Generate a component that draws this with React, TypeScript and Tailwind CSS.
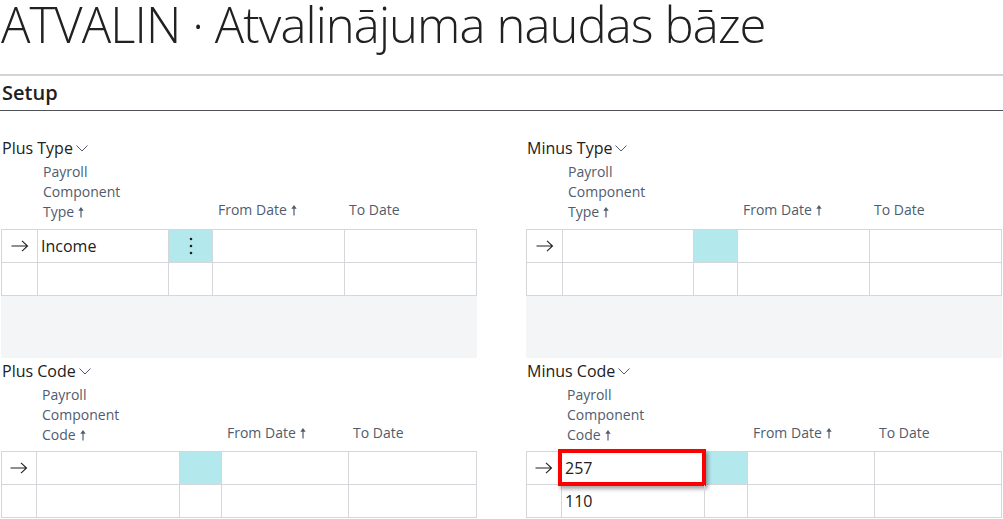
import React from "react";

const font = { fontFamily: '"Open Sans", "Noto Sans", sans-serif' };

function SortArrow() {
  return (
    <svg width="8" height="12" viewBox="0 0 8 12" className="inline-block ml-[3px] -mt-[3px]">
      <path d="M4 11.5V3" stroke="#505c6d" strokeWidth="1.2" />
      <path d="M1.3 4.8L4 1l2.7 3.8z" fill="#505c6d" />
    </svg>
  );
}

function Chevron() {
  return (
    <svg width="14" height="10" viewBox="0 0 14 10" className="inline-block ml-[2px]">
      <path d="M1.5 2.5l5.5 5.5 5.5-5.5" stroke="#505c6d" strokeWidth="1" fill="none" />
    </svg>
  );
}

function RowArrow() {
  return (
    <svg width="18" height="12" viewBox="0 0 18 12">
      <path d="M0.5 6H16.5M11 0.8L16.5 6L11 11.2" stroke="#212121" strokeWidth="1.1" fill="none" />
    </svg>
  );
}

function Dots() {
  return (
    <svg width="4" height="18" viewBox="0 0 4 18">
      <circle cx="2" cy="2" r="1.3" fill="#212121" />
      <circle cx="2" cy="9" r="1.3" fill="#212121" />
      <circle cx="2" cy="16" r="1.3" fill="#212121" />
    </svg>
  );
}

type Row = { arrow?: boolean; value?: string; dots?: boolean; boxed?: boolean };

type SectionProps = {
  label: string;
  kind: string;
  grid: string;
  rows: Row[];
  filler?: boolean;
};

function Section({ label, kind, grid, rows, filler }: SectionProps) {
  return (
    <div>
      <div className="h-6 flex items-center pl-[1px] text-[16px] text-[#212121]">
        {label}
        <Chevron />
      </div>
      <div className={`grid ${grid} mt-[2px] text-[14px] leading-5 text-[#505c6d]`}>
        <div />
        <div className="pl-[6px]">
          Payroll
          <br />
          Component
          <br />
          {kind}
          <SortArrow />
        </div>
        <div />
        <div className="self-end pl-[6px] pb-[2px]">
          From Date
          <SortArrow />
        </div>
        <div className="self-end pl-[5px] pb-[2px]">To Date</div>
      </div>
      <div className={`grid ${grid} ${filler ? "mt-[7px]" : "mt-[6px]"} border-l border-t border-[#d5d6da] bg-white`}>
        {rows.map((r, i) => (
          <React.Fragment key={i}>
            <div className="h-[33px] border-r border-b border-[#d5d6da] flex items-center justify-center">
              {r.arrow && <RowArrow />}
            </div>
            <div className="relative h-[33px] border-r border-b border-[#d5d6da] flex items-center pl-[3px] text-[16px] text-[#212121]">
              {r.value}
              {r.boxed && (
                <div className="absolute -left-[4px] -top-[3px] -right-[2px] -bottom-[2px] border-4 border-[#ff0000] shadow-[2px_3px_4px_rgba(0,0,0,0.35)]" />
              )}
            </div>
            <div
              className={`h-[33px] border-r border-b border-[#d5d6da] flex items-center justify-center ${
                i === 0 ? "bg-[#b3e8ec]" : ""
              }`}
            >
              {r.dots && <Dots />}
            </div>
            <div className="h-[33px] border-r border-b border-[#d5d6da]" />
            <div className="h-[33px] border-r border-b border-[#d5d6da]" />
          </React.Fragment>
        ))}
      </div>
      {filler && <div className="h-[62px] bg-[#f4f5f7]" />}
    </div>
  );
}

export default function App() {
  return (
    <div className="w-[1003px] h-[519px] overflow-hidden bg-white" style={font}>
      <div className="h-[74px] pl-[1px] text-[49px] leading-[48px] tracking-[-0.9px] font-light text-[#212121] whitespace-nowrap">
        ATVALIN · Atvalinājuma naudas bāze
      </div>
      <div className="h-[2px] bg-[#d2d4d8]" />
      <div className="h-[35px] flex items-center pl-[2px] text-[20px] font-semibold text-[#212121] border-b border-[#505458]">
        Setup
      </div>
      <div className="grid grid-cols-[476px_476px] gap-x-[49px] pl-[1px] pt-[25px] gap-y-[1px]">
        <Section
          label="Plus Type"
          kind="Type"
          grid="grid-cols-[36px_131px_44px_132px_1fr]"
          rows={[{ arrow: true, value: "Income", dots: true }, {}]}
          filler
        />
        <Section
          label="Minus Type"
          kind="Type"
          grid="grid-cols-[36px_131px_44px_132px_1fr]"
          rows={[{ arrow: true }, {}]}
          filler
        />
        <Section
          label="Plus Code"
          kind="Code"
          grid="grid-cols-[35px_143px_42px_127px_1fr]"
          rows={[{ arrow: true }, {}]}
        />
        <Section
          label="Minus Code"
          kind="Code"
          grid="grid-cols-[35px_143px_43px_127px_1fr]"
          rows={[{ arrow: true, value: "257", boxed: true }, { value: "110" }]}
        />
      </div>
    </div>
  );
}
